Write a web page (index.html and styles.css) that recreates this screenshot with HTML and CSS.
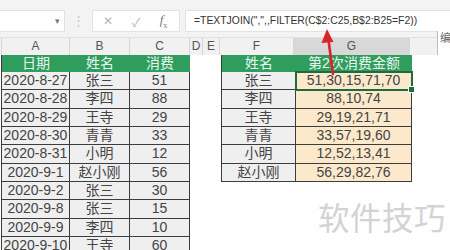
FILE: index.html
```html
<!DOCTYPE html>
<html lang="zh-CN">
<head>
  <meta charset="UTF-8">
  <meta name="viewport" content="width=device-width, initial-scale=1.0">
  <title>TEXTJOIN FILTER</title>
  <link rel="stylesheet" href="styles.css">
</head>
<body>

<div class="app">
  <div class="toolbar">
    <div class="namebox"><span class="caret">▾</span></div>
    <span class="grip">⋮</span>
    <div class="fxbox">
      <span class="ico">✕</span>
      <span class="ico">✓</span>
      <span class="ico fx"><i>f</i><sub>x</sub></span>
    </div>
    <div class="formula">=TEXTJOIN(",",,FILTER(C$2:C25,B$2:B25=F2))</div>
  </div>

  <div class="colheads">
    <div class="ch"></div>
    <div class="ch">A</div>
    <div class="ch">B</div>
    <div class="ch">C</div>
    <div class="ch">D</div>
    <div class="ch">E</div>
    <div class="ch">F</div>
    <div class="ch active">G</div>
    <div class="ch"></div>
  </div>

  <div class="sheet">
    <div class="tbl tbl-left">
      <div class="hd">日期</div><div class="hd">姓名</div><div class="hd">消费</div>
      <div class="cell">2020-8-27</div><div class="cell">张三</div><div class="cell">51</div>
      <div class="cell">2020-8-28</div><div class="cell">李四</div><div class="cell">88</div>
      <div class="cell">2020-8-29</div><div class="cell">王寺</div><div class="cell">29</div>
      <div class="cell">2020-8-30</div><div class="cell">青青</div><div class="cell">33</div>
      <div class="cell">2020-8-31</div><div class="cell">小明</div><div class="cell">12</div>
      <div class="cell">2020-9-1</div><div class="cell">赵小刚</div><div class="cell">56</div>
      <div class="cell">2020-9-2</div><div class="cell">张三</div><div class="cell">30</div>
      <div class="cell">2020-9-8</div><div class="cell">张三</div><div class="cell">15</div>
      <div class="cell">2020-9-9</div><div class="cell">李四</div><div class="cell">10</div>
      <div class="cell">2020-9-10</div><div class="cell">王寺</div><div class="cell">60</div>
    </div>

    <div class="spacer"></div>

    <div class="tbl tbl-right">
      <div class="hd">姓名</div><div class="hd">第2次消费金额</div>
      <div class="cell">张三</div><div class="cell amount selected">51,30,15,71,70</div>
      <div class="cell">李四</div><div class="cell amount">88,10,74</div>
      <div class="cell">王寺</div><div class="cell amount">29,19,21,71</div>
      <div class="cell">青青</div><div class="cell amount">33,57,19,60</div>
      <div class="cell">小明</div><div class="cell amount">12,52,13,41</div>
      <div class="cell">赵小刚</div><div class="cell amount">56,29,82,76</div>
    </div>
  </div>

  <div class="popup">编</div>

  <svg class="arrow" width="450" height="250" viewBox="0 0 450 250">
    <line x1="333" y1="74" x2="328.5" y2="40" stroke="#d9252a" stroke-width="2.6" stroke-linecap="round"/>
    <polygon points="327,29 321.5,43 333.5,42" fill="#d9252a"/>
  </svg>

  <div class="watermark">软件技巧</div>
</div>

</body>
</html>
```

FILE: styles.css
```css
body {
    margin: 0;
    padding: 0;
    font-family: "Liberation Sans", "Noto Sans CJK SC", sans-serif;
    background-color: #ffffff;
}

.app {
    position: relative;
    width: 450px;
    height: 250px;
    overflow: hidden;
    background-color: #ffffff;
}

/* formula bar */
.toolbar {
    height: 37px;
    box-sizing: border-box;
    padding-top: 10px;
    background-color: #f3f3f3;
    display: flex;
    align-items: flex-start;
}

.namebox {
    width: 65px;
    height: 22px;
    box-sizing: border-box;
    background-color: #ffffff;
    border: 1px solid #e2e2e2;
    border-left: none;
    display: flex;
    justify-content: flex-end;
    align-items: center;
    padding-right: 4px;
}

.caret {
    font-size: 9px;
    color: #777;
}

.grip {
    width: 27px;
    text-align: center;
    color: #c4c4c4;
    font-size: 13px;
    line-height: 22px;
}

.fxbox {
    width: 88px;
    height: 22px;
    box-sizing: border-box;
    background-color: #ffffff;
    border: 1px solid #e2e2e2;
    display: flex;
    align-items: center;
    justify-content: space-around;
    padding: 0 2px 0 0;
}

.ico {
    color: #b5b5b5;
    font-size: 12px;
}

.fx {
    color: #777;
    font-family: "Liberation Serif", serif;
    font-size: 13px;
}

.fx sub {
    font-size: 8px;
}

.formula {
    flex: 1;
    height: 22px;
    margin-left: 5px;
    box-sizing: border-box;
    background-color: #ffffff;
    border: 1px solid #e2e2e2;
    border-right: none;
    padding-left: 8px;
    font-size: 10.4px;
    line-height: 20px;
    color: #333;
    white-space: nowrap;
}

/* column letters */
.colheads {
    height: 18px;
    display: grid;
    grid-template-columns: 2px 68px 60px 60px 13px 17px 74px 116px 1fr;
    background-color: #f1f1f1;
    border-top: 1px solid #e0e0e0;
    box-sizing: border-box;
}

.ch {
    border-right: 1px solid #d6d6d6;
    font-size: 12px;
    color: #555;
    text-align: center;
    line-height: 17px;
}

.ch.active {
    background-color: #d8d8d8;
}

/* sheet body */
.sheet {
    display: flex;
    align-items: flex-start;
    padding-left: 1px;
}

.spacer {
    width: 31px;
}

.tbl {
    display: grid;
    grid-auto-rows: 18.33px;
    border-left: 1px solid #3c3c3c;
}

.tbl-left {
    grid-template-columns: 68px 60px 60px;
    grid-template-rows: 17px;
}

.tbl-right {
    grid-template-columns: 74px 116px;
    grid-template-rows: 17px;
}

.hd {
    background-color: #2f9d5e;
    color: #e8f6ec;
    font-size: 14px;
    text-align: center;
    line-height: 17px;
}

.cell {
    box-sizing: border-box;
    background-color: #efefef;
    border-right: 1px solid #3c3c3c;
    border-bottom: 1px solid #3c3c3c;
    color: #444;
    font-size: 14px;
    text-align: center;
    line-height: 17px;
    white-space: nowrap;
}

.cell.amount {
    background-color: #fce9cc;
}

.cell.selected {
    position: relative;
    outline: 2px solid #1f6b40;
    outline-offset: -1px;
}

.cell.selected::after {
    content: "";
    position: absolute;
    right: -4px;
    bottom: -4px;
    width: 5px;
    height: 5px;
    background-color: #1f6b40;
    border: 1px solid #ffffff;
}

/* overlays */
.popup {
    position: absolute;
    left: 437px;
    top: 31px;
    width: 16px;
    height: 24px;
    background-color: #ffffff;
    border-left: 1px solid #bdbdbd;
    font-size: 11px;
    color: #666;
    padding-left: 2px;
    line-height: 14px;
}

.arrow {
    position: absolute;
    left: 0;
    top: 0;
    pointer-events: none;
}

.watermark {
    position: absolute;
    left: 318px;
    top: 193px;
    font-family: "Noto Sans CJK SC", sans-serif;
    font-size: 31.5px;
    color: #d3d3d3;
    letter-spacing: 0.5px;
    white-space: nowrap;
}
```
